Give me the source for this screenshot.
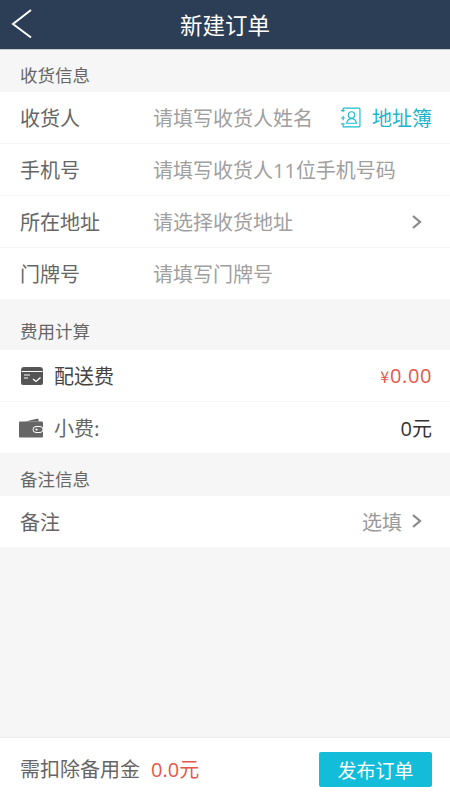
<script>
</script>

<div class="page">
  <header class="nav">
    <svg class="back" width="22" height="30" viewBox="0 0 22 30"><path d="M20 1 L2 15 L20 28.500" fill="none" stroke="#fff" stroke-width="2"/></svg>
    <span class="title">新建订单</span>
  </header>

  <div class="section s1">收货信息</div>
  <div class="group">
    <div class="row">
      <span class="label">收货人</span>
      <span class="ph">请填写收货人姓名</span>
      <span class="book">
        <svg width="21" height="21" viewBox="0 0 20 20" fill="none" stroke="#1cbdd0" stroke-width="1.100">
          <path d="M3 1H18a1 1 0 0 1 1 1V18a1 1 0 0 1-1 1H3V16.500M3 12.500V8.500M3 4.500V1"/>
          <path d="M1 3.500h3.500M1 10.500h3.500M1 16h3.500"/>
          <circle cx="11" cy="7.500" r="3"/>
          <path d="M6.300 15.500c.5-3 2.300-4.500 4.700-4.500s4.200 1.500 4.700 4.500z"/>
        </svg>
        地址簿
      </span>
    </div>
    <div class="row"><span class="label">手机号</span><span class="ph">请填写收货人<span class="num">11</span>位手机号码</span></div>
    <div class="row">
      <span class="label">所在地址</span><span class="ph">请选择收货地址</span>
      <svg class="chev" width="12" height="16" viewBox="0 0 12 16"><path d="M2 2 L9 8 L2 14" fill="none" stroke="#888" stroke-width="2.200"/></svg>
    </div>
    <div class="row last"><span class="label">门牌号</span><span class="ph">请填写门牌号</span></div>
  </div>

  <div class="section s2">费用计算</div>
  <div class="group">
    <div class="row fee">
      <svg class="ico" width="24" height="20" viewBox="0 0 24 20">
        <path d="M1 4.500C1 2 2 1 4 1H19.500C22 1 23 2 23 4.500V17a2 2 0 0 1-2 2H3a2 2 0 0 1-2-2z" fill="#555"/>
        <path d="M1.500 5.500H22.500" stroke="#fff" stroke-width="1"/>
        <path d="M4 9H10M4 12H8" stroke="#fff" stroke-width="1.200"/>
        <path d="M13 13 L16 15.500 L20.500 11.500" fill="none" stroke="#fff" stroke-width="1.300"/>
      </svg>
      <span class="fee-label dark">配送费</span>
      <span class="price">¥<span class="price-num">0.00</span></span>
    </div>
    <div class="row fee last">
      <svg class="ico wallet" width="24" height="20" viewBox="0 0 24 20">
        <path d="M6 3.500 L19 0.500 L20 3.500z" fill="#666"/>
        <rect x="0" y="3.500" width="24" height="16" rx="1" fill="#666"/>
        <rect x="14" y="8.500" width="10" height="6" rx="3" fill="#666" stroke="#fff" stroke-width="1"/>
        <circle cx="17.500" cy="11.500" r="1.100" fill="#fff"/>
      </svg>
      <span class="fee-label">小费:</span>
      <span class="tip"><span class="num">0</span>元</span>
    </div>
  </div>

  <div class="section s3">备注信息</div>
  <div class="group">
    <div class="row note">
      <span class="label">备注</span>
      <span class="opt">选填</span>
      <svg class="chev" width="12" height="16" viewBox="0 0 12 16"><path d="M2 2 L9 8 L2 14" fill="none" stroke="#888" stroke-width="2.200"/></svg>
    </div>
  </div>

  <div class="spacer"></div>

  <footer class="foot">
    <span class="need">需扣除备用金</span>
    <span class="amt"><span class="num">0.0</span>元</span>
    <button class="submit">发布订单</button>
  </footer>
</div>

<style>
  :global(body) { margin: 0; }
  .page {
    width: 450px; height: 800px; display: flex; flex-direction: column;
    background: #f6f6f6; overflow: hidden;
    font-family: "Noto Sans CJK SC", "Noto Sans", sans-serif; font-weight: 400; color: #666;
  }
  .nav {
    height: 49px; flex: none; background: #2c3e55; display: flex; align-items: center; justify-content: center;
    position: relative; border-bottom: 1px solid #c8ced6; box-sizing: content-box;
  }
  .title { color: #fff; font-size: 22.500px; margin-top: -1px; }
  .back { position: absolute; left: 11px; top: 9px; }
  .section { font-size: 17.500px; color: #666; padding: 7px 0 0 20px; display: flex; align-items: center; flex: none; box-sizing: border-box; }
  .s1 { height: 42px; }
  .s2 { height: 51px; padding-top: 11px; }
  .s3 { height: 43px; padding-top: 8px; }
  .group { background: #fff; flex: none; }
  .row {
    height: 51px; border-bottom: 1px solid #f6f6f6; display: flex; align-items: center;
    padding: 0 18px 0 20px; position: relative; font-size: 20px;
  }
  .row.last { border-bottom: none; }
  .label { width: 133px; flex: none; font-size: 20px; color: #666; }
  .ph { color: #a0a0a0; font-size: 20px; }
  .num { font-family: "Open Sans", sans-serif; }
  .book { margin-left: auto; color: #1cb5cc; display: flex; align-items: center; gap: 11px; font-size: 20px; }
  .chev { position: absolute; right: 27px; top: 18px; }
  .fee { height: 51px; }
  .ico { flex: none; margin-right: 10px; }
  .wallet { margin-left: -1px; margin-right: 11px; }
  .fee-label { font-size: 20px; color: #666; }
  .fee-label.dark { color: #444; }
  .price { margin-left: auto; color: #e4574c; font-size: 16px; }
  .price-num { font-size: 20px; margin-left: 1px; letter-spacing: 0.6px; font-family: "Open Sans", sans-serif; }
  .tip { margin-left: auto; color: #333; font-size: 20px; }
  .note { height: 51px; border-bottom: none; }
  .opt { margin-left: auto; margin-right: 30px; color: #999; font-size: 20px; }
  .note .chev { top: 17px; }
  .spacer { flex: 1; }
  .foot {
    height: 62px; flex: none; background: #fff; border-top: 1px solid #ececec; display: flex; align-items: center;
    padding: 0 18px 0 20px;
  }
  .need { font-size: 20px; color: #666; margin-top: -1px; }
  .amt { font-size: 20px; color: #e4574c; margin-left: 11px; margin-top: -1px; }
  .submit {
    margin-left: auto; width: 113px; height: 35px; border: none; border-radius: 2px; background: #13bdd9;
    color: #fff; font-size: 19px; font-family: inherit; padding: 0;
  }
</style>
